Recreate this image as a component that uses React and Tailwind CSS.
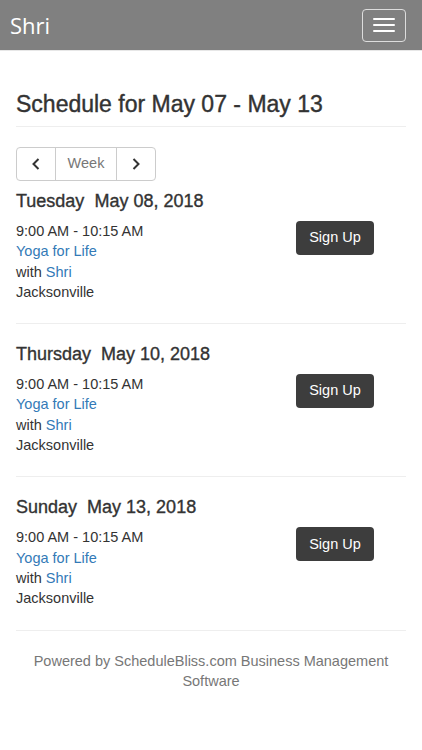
const DAYS = [
  { day: 'Tuesday', date: 'May 08, 2018' },
  { day: 'Thursday', date: 'May 10, 2018' },
  { day: 'Sunday', date: 'May 13, 2018' },
];

function ClassRow({ day, date }) {
  return (
    <div className="border-b border-[#eee] pb-[21px] mb-[20px]">
      <h4 className="text-[18px] leading-[20px] text-[#333] [-webkit-text-stroke:0.35px_#333]">
        {day}&nbsp;&nbsp;{date}
      </h4>
      <div className="flex mt-[10px]">
        <div className="w-[280px] text-[14.5px] leading-[20.3px] text-[#333]">
          <div>9:00 AM - 10:15 AM</div>
          <div><a href="#" className="text-[#337ab7]">Yoga for Life</a></div>
          <div>with <a href="#" className="text-[#337ab7]">Shri</a></div>
          <div>Jacksonville</div>
        </div>
        <div>
          <button className="h-[34px] w-[78px] rounded-[4px] bg-[#3d3d3d] text-white text-[14.5px]">
            Sign Up
          </button>
        </div>
      </div>
    </div>
  );
}

export default function App() {
  return (
    <div className="min-h-[750px] bg-white" style={{ fontFamily: '"Liberation Sans", Arial, sans-serif' }}>
      {/* Navbar */}
      <nav className="h-[51px] bg-[#808080] flex items-center justify-between pl-[10px] pr-[16px] border-b border-[#e7e7e7]">
        <span className="text-white text-[22px] leading-none" style={{ fontFamily: '"Open Sans", sans-serif' }}>Shri</span>
        <button className="w-[44px] h-[33px] border border-[#ddd] rounded-[4px] flex flex-col items-center justify-center gap-[4px]">
          <span className="block w-[22px] h-[2px] bg-white rounded-[1px]" />
          <span className="block w-[22px] h-[2px] bg-white rounded-[1px]" />
          <span className="block w-[22px] h-[2px] bg-white rounded-[1px]" />
        </button>
      </nav>

      <div className="px-[16px]">
        <div className="mt-[40px] pb-[9px] border-b border-[#eee] mb-[20px]">
          <h1 className="text-[23px] leading-[26px] text-[#333] [-webkit-text-stroke:0.4px_#333]">Schedule for May 07 - May 13</h1>
        </div>

        <div className="inline-flex h-[34px] border border-[#ccc] rounded-[4px] text-[#333] mb-[10px]">
          <button className="w-[39px] flex items-center justify-center border-r border-[#ccc]">
            <svg width="12" height="14" viewBox="0 0 12 14" fill="none" stroke="#333" strokeWidth="2">
              <path d="M8.5 2 L3.5 7 L8.5 12" />
            </svg>
          </button>
          <span className="w-[61px] flex items-center justify-center text-[14.5px] text-[#777] border-r border-[#ccc]">Week</span>
          <button className="w-[38px] flex items-center justify-center">
            <svg width="12" height="14" viewBox="0 0 12 14" fill="none" stroke="#333" strokeWidth="2">
              <path d="M3.5 2 L8.5 7 L3.5 12" />
            </svg>
          </button>
        </div>

        {DAYS.map(d => <ClassRow key={d.day} {...d} />)}

        <p className="text-center text-[14.5px] leading-[20px] text-[#777]">
          Powered by ScheduleBliss.com Business Management Software
        </p>
      </div>
    </div>
  );
}
